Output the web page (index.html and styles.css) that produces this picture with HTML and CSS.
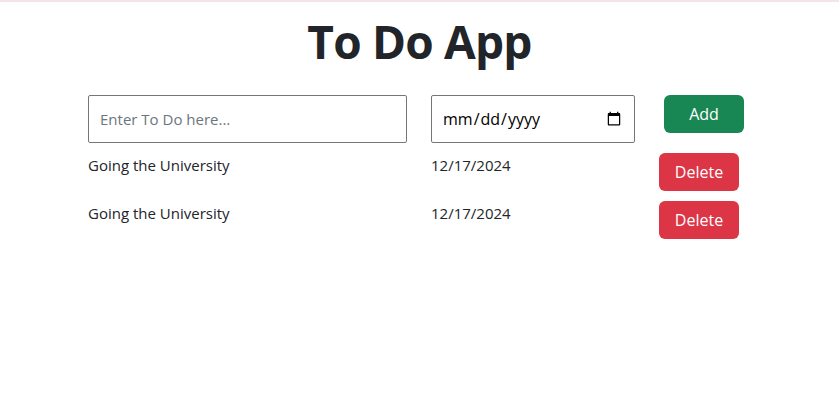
FILE: index.html
```html
<!DOCTYPE html>
<html lang="en">
<head>
<meta charset="utf-8">
<title>To Do App</title>
<link rel="stylesheet" href="styles.css">
</head>
<body>
<div class="page">
  <h1 class="title">To Do App</h1>
  <div class="grid form-row">
    <div class="cell"><input class="todo-input" type="text" placeholder="Enter To Do here..."></div>
    <div class="cell"><input class="date-input" type="date"></div>
    <div class="cell"><button class="btn btn-add">Add</button></div>
  </div>
  <div class="grid item-row">
    <div class="cell item-text">Going the University</div>
    <div class="cell item-text">12/17/2024</div>
    <div class="cell"><button class="btn btn-delete">Delete</button></div>
  </div>
  <div class="grid item-row">
    <div class="cell item-text">Going the University</div>
    <div class="cell item-text">12/17/2024</div>
    <div class="cell"><button class="btn btn-delete">Delete</button></div>
  </div>
</div>
</body>
</html>
```
FILE: styles.css
```css
* { box-sizing: border-box; }
html, body { margin: 0; padding: 0; background: #fff; }
body {
  border-top: 2px solid #f3e3ea;
  font-family: "Open Sans", "Noto Sans", sans-serif;
  color: #212529;
  font-size: 16px;
}
.page { padding-left: 88px; }
.title {
  margin: 0;
  padding-top: 10px;
  height: 93px;
  text-align: center;
  font-size: 46px;
  font-weight: 700;
  line-height: 58px;
  padding-right: 88px;
  letter-spacing: -0.8px;
}
.grid {
  display: grid;
  grid-template-columns: 343px 228px 100px;
}
.form-row .cell:nth-child(3) { padding-left: 5px; }
.todo-input {
  width: 319px;
  height: 48px;
  border: 1px solid #767676;
  border-radius: 2px;
  padding: 0 11px;
  font: inherit;
  font-size: 15px;
  color: #212529;
}
.todo-input::placeholder { color: #6c757d; }
.date-input {
  width: 204px;
  height: 48px;
  border: 1px solid #767676;
  border-radius: 2px;
  padding: 0 10px;
  font: inherit;
  font-size: 16px;
  color: #000;
}
.btn {
  width: 80px;
  height: 38px;
  border: none;
  border-radius: 6px;
  color: #fff;
  font: inherit;
  font-size: 16px;
  padding: 0;
}
.btn-add { background: #198754; }
.btn-delete { background: #dc3545; }
.form-row { margin-bottom: 10px; }
.item-row { height: 48px; }
.item-text { padding-top: 0; line-height: 24px; font-size: 15px; }
```
